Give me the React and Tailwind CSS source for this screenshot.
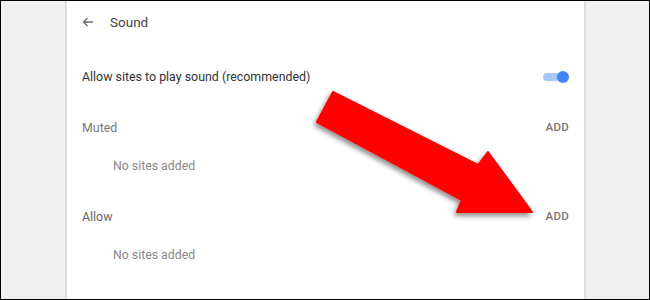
import React from "react";

const font = { fontFamily: "Roboto, 'Liberation Sans', sans-serif" };

function Row({ children, className = "" }) {
  return <div className={"flex items-center justify-between " + className}>{children}</div>;
}

export default function App() {
  return (
    <div className="relative w-[650px] h-[300px] border border-black bg-[#f1f1f1] overflow-hidden" style={font}>
      <div className="ml-[64px] w-[521px] h-full bg-white border-x-2 border-[#dcdcdc]">
        <div className="h-[42px] flex items-center pl-[15px]">
          <svg width="12" height="12" viewBox="0 0 12 12" className="text-[#6b6b6b]">
            <path d="M11 6H1.5M5.5 2L1.5 6l4 4" fill="none" stroke="currentColor" strokeWidth="1.3" />
          </svg>
          <span className="ml-[16px] text-[13.5px] text-[#444]">Sound</span>
        </div>
        <Row className="mt-[14px] h-[40px] pl-[15px] pr-[15px]">
          <span className="text-[12.4px] text-[#333]">Allow sites to play sound (recommended)</span>
          <div className="relative w-[26px] h-[14px] flex items-center">
            <div className="w-[22px] h-[8px] rounded-full bg-[#a8c6fa]" />
            <div className="absolute right-0 top-[1px] w-[12px] h-[12px] rounded-full bg-[#4285f4]" />
          </div>
        </Row>
        <Row className="mt-[11px] h-[40px] pl-[15px] pr-[15px]">
          <span className="text-[12.4px] text-[#777]">Muted</span>
          <span className="text-[11.5px] font-medium text-[#777] tracking-[0.3px]">ADD</span>
        </Row>
        <div className="h-[36px] flex items-center pl-[46px] text-[12.3px] text-[#888]">No sites added</div>
        <Row className="mt-[13px] h-[40px] pl-[15px] pr-[15px]">
          <span className="text-[12.4px] text-[#666]">Allow</span>
          <span className="text-[11.5px] font-medium text-[#777] tracking-[0.3px]">ADD</span>
        </Row>
        <div className="h-[36px] flex items-center pl-[46px] text-[12.3px] text-[#888]">No sites added</div>
      </div>
      <svg className="absolute left-0 top-0" width="650" height="300" viewBox="0 0 650 300">
        <defs>
          <filter id="sh" x="-20%" y="-20%" width="140%" height="140%">
            <feDropShadow dx="-2" dy="3" stdDeviation="2.5" floodColor="#000" floodOpacity="0.45" />
          </filter>
        </defs>
        <polygon
          points="333,92 478,165 488,152 532,212 457,212 462,200 317,122"
          fill="#ff0000"
          stroke="#ff0000"
          strokeWidth="2"
          strokeLinejoin="round"
          filter="url(#sh)"
          transform="translate(-1,-1)"
        />
      </svg>
    </div>
  );
}
